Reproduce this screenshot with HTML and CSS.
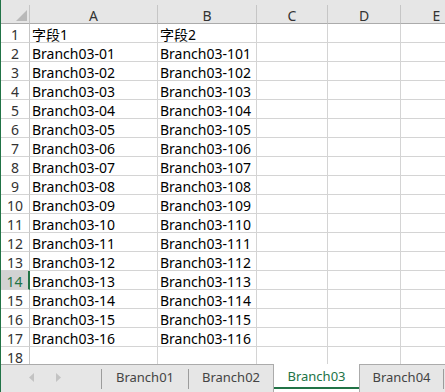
FILE: index.html
```html
<!DOCTYPE html>
<html lang="en">

<head>
    <meta charset="UTF-8">
    <title>Branch03</title>
    <link rel="stylesheet" href="styles.css">
</head>

<body>

    <div class="workbook">
        <div class="sheet">
            <div class="grid">
                <div class="corner">
                    <svg width="11" height="11" viewBox="0 0 11 11"><polygon points="11,0 11,11 0,11" fill="#b9b9b9"/></svg>
                </div>
                <div class="col-head">A</div>
                <div class="col-head">B</div>
                <div class="col-head">C</div>
                <div class="col-head">D</div>
                <div class="col-head">E</div>

                <div class="row-head">1</div><div class="cell">字段1</div><div class="cell">字段2</div><div class="cell"></div><div class="cell"></div><div class="cell"></div>
                <div class="row-head">2</div><div class="cell">Branch03-01</div><div class="cell">Branch03-101</div><div class="cell"></div><div class="cell"></div><div class="cell"></div>
                <div class="row-head">3</div><div class="cell">Branch03-02</div><div class="cell">Branch03-102</div><div class="cell"></div><div class="cell"></div><div class="cell"></div>
                <div class="row-head">4</div><div class="cell">Branch03-03</div><div class="cell">Branch03-103</div><div class="cell"></div><div class="cell"></div><div class="cell"></div>
                <div class="row-head">5</div><div class="cell">Branch03-04</div><div class="cell">Branch03-104</div><div class="cell"></div><div class="cell"></div><div class="cell"></div>
                <div class="row-head">6</div><div class="cell">Branch03-05</div><div class="cell">Branch03-105</div><div class="cell"></div><div class="cell"></div><div class="cell"></div>
                <div class="row-head">7</div><div class="cell">Branch03-06</div><div class="cell">Branch03-106</div><div class="cell"></div><div class="cell"></div><div class="cell"></div>
                <div class="row-head">8</div><div class="cell">Branch03-07</div><div class="cell">Branch03-107</div><div class="cell"></div><div class="cell"></div><div class="cell"></div>
                <div class="row-head">9</div><div class="cell">Branch03-08</div><div class="cell">Branch03-108</div><div class="cell"></div><div class="cell"></div><div class="cell"></div>
                <div class="row-head">10</div><div class="cell">Branch03-09</div><div class="cell">Branch03-109</div><div class="cell"></div><div class="cell"></div><div class="cell"></div>
                <div class="row-head">11</div><div class="cell">Branch03-10</div><div class="cell">Branch03-110</div><div class="cell"></div><div class="cell"></div><div class="cell"></div>
                <div class="row-head">12</div><div class="cell">Branch03-11</div><div class="cell">Branch03-111</div><div class="cell"></div><div class="cell"></div><div class="cell"></div>
                <div class="row-head">13</div><div class="cell">Branch03-12</div><div class="cell">Branch03-112</div><div class="cell"></div><div class="cell"></div><div class="cell"></div>
                <div class="row-head selected">14</div><div class="cell">Branch03-13</div><div class="cell">Branch03-113</div><div class="cell"></div><div class="cell"></div><div class="cell"></div>
                <div class="row-head">15</div><div class="cell">Branch03-14</div><div class="cell">Branch03-114</div><div class="cell"></div><div class="cell"></div><div class="cell"></div>
                <div class="row-head">16</div><div class="cell">Branch03-15</div><div class="cell">Branch03-115</div><div class="cell"></div><div class="cell"></div><div class="cell"></div>
                <div class="row-head">17</div><div class="cell">Branch03-16</div><div class="cell">Branch03-116</div><div class="cell"></div><div class="cell"></div><div class="cell"></div>
                <div class="row-head">18</div><div class="cell"></div><div class="cell"></div><div class="cell"></div><div class="cell"></div><div class="cell"></div>
            </div>
        </div>

        <div class="tabbar">
            <div class="tab-nav">
                <svg width="5" height="9" viewBox="0 0 5 9"><polygon points="5,0 5,9 0,4.5" fill="#c3c3c3"/></svg>
                <svg width="5" height="9" viewBox="0 0 5 9"><polygon points="0,0 0,9 5,4.5" fill="#c3c3c3"/></svg>
            </div>
            <div class="tab first">Branch01</div>
            <div class="tab second">Branch02</div>
            <div class="tab active">Branch03</div>
            <div class="tab fourth">Branch04</div>
        </div>
    </div>

</body>

</html>
```

FILE: styles.css
```css
body {
    margin: 0;
    font-family: "Noto Sans", "Noto Sans CJK SC", sans-serif;
    font-size: 14px;
    background-color: #fff;
}

.workbook {
    width: 445px;
    height: 392px;
    border-left: 1px solid #217346;
    box-sizing: border-box;
    display: flex;
    flex-direction: column;
    overflow: hidden;
}

.sheet {
    height: 364px;
    overflow: hidden;
    background-color: #e6e6e6;
    padding-top: 5px;
    box-sizing: border-box;
}

.grid {
    display: grid;
    grid-template-columns: 29px 128px 99px 71px 73px 72px;
    grid-auto-rows: 19px;
}

.grid > div {
    box-sizing: border-box;
    display: flex;
    align-items: flex-end;
    line-height: 15px;
    white-space: nowrap;
    overflow: hidden;
}

.corner {
    border-right: 1px solid #c6c6c6;
    border-bottom: 1px solid #ababab;
    justify-content: flex-end;
    padding: 0 2px 2px 0;
}

.corner svg {
    display: block;
}

.col-head {
    justify-content: center;
    color: #333;
    border-right: 1px solid #c6c6c6;
    border-bottom: 1px solid #ababab;
}

.row-head {
    justify-content: center;
    color: #333;
    background-color: #fff;
    border-right: 1px solid #c6c6c6;
    border-bottom: 1px solid #d4d4d4;
}

.row-head.selected {
    background-color: #d2d2d2;
    color: #217346;
    border-right: 2px solid #217346;
}

.cell {
    background-color: #fff;
    color: #000;
    padding-left: 2px;
    border-right: 1px solid #d4d4d4;
    border-bottom: 1px solid #d4d4d4;
}

.tabbar {
    flex: 1;
    display: flex;
    align-items: center;
    background-color: #e6e6e6;
    border-top: 1px solid #ababab;
    font-size: 13px;
}

.tab-nav {
    width: 100px;
    display: flex;
    gap: 22px;
    padding-left: 28px;
    padding-bottom: 2px;
    box-sizing: border-box;
}

.tab-nav svg {
    display: block;
}

.tab {
    height: 20px;
    line-height: 17px;
    text-align: center;
    color: #444;
    border-left: 1px solid #9c9c9c;
    box-sizing: border-box;
}

.tab.first {
    width: 87px;
}

.tab.second {
    width: 85px;
}

.tab.fourth {
    width: 84px;
    border-left: none;
    border-right: 1px solid #9c9c9c;
}

.tab.active {
    width: 87px;
    height: 28px;
    margin-top: -1px;
    align-self: flex-start;
    line-height: 24px;
    color: #217346;
    background-color: #fff;
    border-left: 1px solid #ababab;
    border-right: 1px solid #ababab;
    box-shadow: inset 0 -3px 0 #fff, inset 0 -5px 0 #217346;
}
```
